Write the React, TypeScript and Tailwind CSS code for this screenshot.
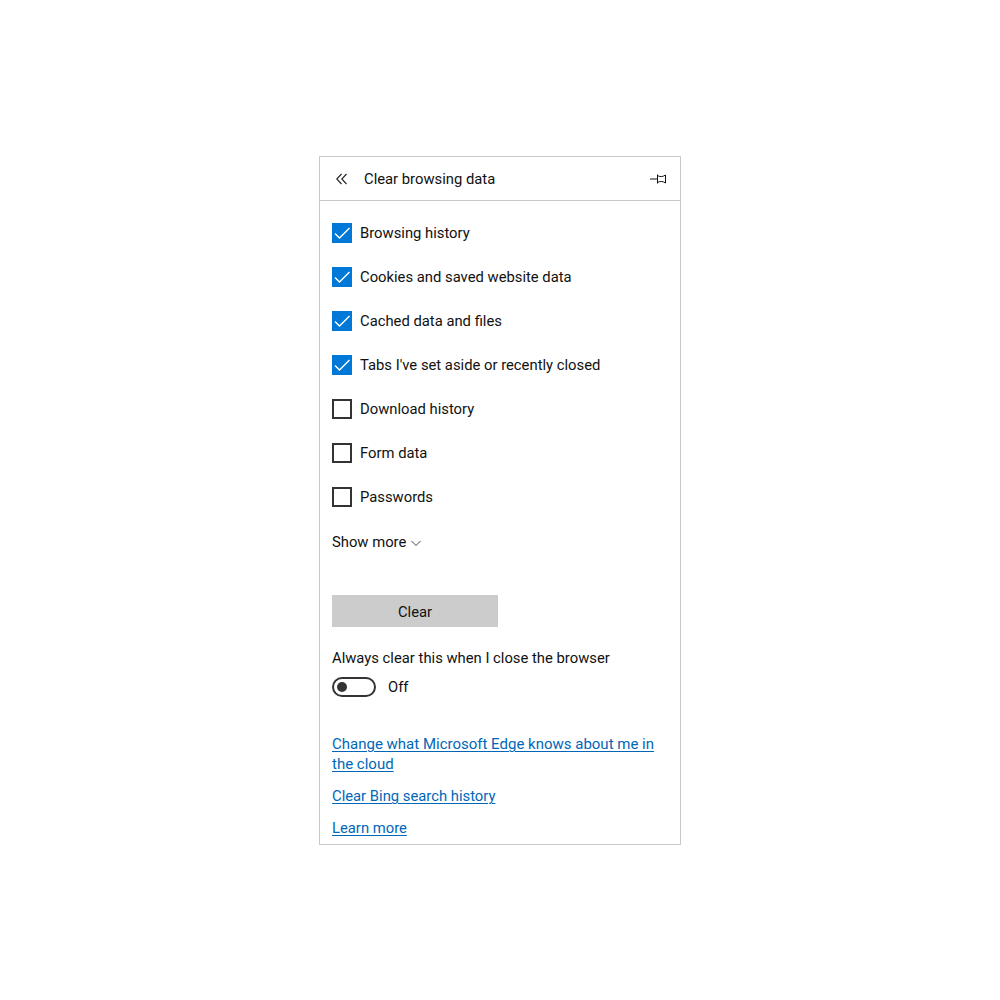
import * as React from "react";

const options = [
  { label: "Browsing history", checked: true },
  { label: "Cookies and saved website data", checked: true },
  { label: "Cached data and files", checked: true },
  { label: "Tabs I've set aside or recently closed", checked: true },
  { label: "Download history", checked: false },
  { label: "Form data", checked: false },
  { label: "Passwords", checked: false },
];

const linkClass = "text-[#0067b8] underline underline-offset-2 decoration-1";

function Checkbox({ checked }: { checked: boolean }) {
  if (!checked) {
    return <span className="h-5 w-5 shrink-0 border-2 border-[#333333] bg-white" />;
  }
  return (
    <span className="flex h-5 w-5 shrink-0 items-center justify-center bg-[#0078d7]">
      <svg width="20" height="20" viewBox="0 0 20 20" fill="none">
        <path d="M3 10.5 L7.5 15 L17.5 5" stroke="#ffffff" strokeWidth="1.4" />
      </svg>
    </span>
  );
}

export default function App() {
  return (
    <div className="flex min-h-[1000px] justify-center bg-white pt-[156px] font-['Roboto',sans-serif] text-[14.8px] text-[#111111]">
      <div className="h-[689px] w-[362px] border border-[#c8c8c8]">
        {/* Header */}
        <div className="flex h-11 items-center border-b border-[#c8c8c8] pl-4 pr-[13px]">
          <svg width="12" height="12" viewBox="0 0 12 12" fill="none" className="shrink-0">
            <path d="M5.5 1 L0.8 6 L5.5 11 M10.5 1 L5.8 6 L10.5 11" stroke="#222222" strokeWidth="1.1" />
          </svg>
          <span className="ml-4 flex-1 pt-px">Clear browsing data</span>
          <svg width="17" height="12" viewBox="0 0 17 12" fill="none" className="shrink-0">
            <path d="M0 6 H7.5 M7.5 1.5 V10.5 M7.5 2.5 C9.5 4 13 4 15.5 2 V10 C13 8 9.5 8 7.5 9.5" stroke="#111111" strokeWidth="1" />
          </svg>
        </div>

        <div className="px-3">
          {/* Options */}
          <div className="flex flex-col gap-6 pt-[22px]">
            {options.map((o) => (
              <label key={o.label} className="flex h-5 items-center gap-2">
                <Checkbox checked={o.checked} />
                <span>{o.label}</span>
              </label>
            ))}
          </div>

          <div className="mt-[25px] flex h-5 items-center gap-1">
            <span>Show more</span>
            <svg width="12" height="12" viewBox="0 0 12 12" fill="none" className="mt-[2px]">
              <path d="M1.5 4 L6 8.5 L10.5 4" stroke="#444444" strokeWidth="1" />
            </svg>
          </div>

          <button className="mt-[43px] block h-8 w-[166px] bg-[#cccccc] pt-[2px] text-[#111111]">Clear</button>

          <div className="mt-[21px] leading-5">Always clear this when I close the browser</div>

          <div className="mt-[9px] flex h-5 items-center gap-3">
            <span className="flex h-5 w-11 items-center rounded-full border-2 border-[#333333] pl-[3px]">
              <span className="h-[10px] w-[10px] rounded-full bg-[#333333]" />
            </span>
            <span>Off</span>
          </div>

          {/* Links */}
          <div className="mt-[37px] text-[15px] leading-5">
            <a href="#" className={linkClass}>Change what Microsoft Edge knows about me in the cloud</a>
          </div>
          <div className="mt-3 leading-5">
            <a href="#" className={linkClass}>Clear Bing search history</a>
          </div>
          <div className="mt-3 leading-5">
            <a href="#" className={linkClass}>Learn more</a>
          </div>
        </div>
      </div>
    </div>
  );
}
